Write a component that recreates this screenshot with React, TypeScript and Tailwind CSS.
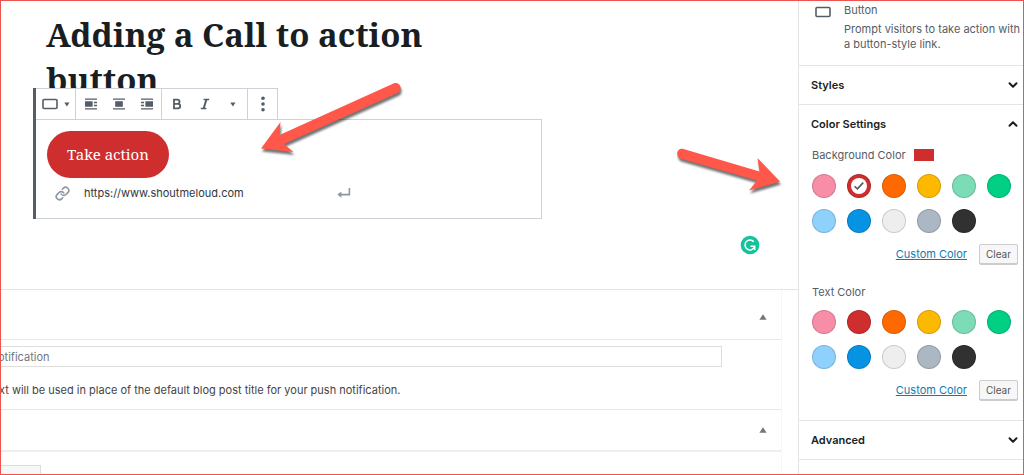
import { useState } from 'react';
import { ChevronDown, ChevronUp } from 'lucide-react';
import clsx from 'clsx';

const palette = [
  { name: 'Pale pink', bg: 'bg-[#f78da7]' },
  { name: 'Vivid red', bg: 'bg-[#cf2e2e]' },
  { name: 'Luminous vivid orange', bg: 'bg-[#ff6900]' },
  { name: 'Luminous vivid amber', bg: 'bg-[#fcb900]' },
  { name: 'Light green cyan', bg: 'bg-[#7bdcb5]' },
  { name: 'Vivid green cyan', bg: 'bg-[#00d084]' },
  { name: 'Pale cyan blue', bg: 'bg-[#8ed1fc]' },
  { name: 'Vivid cyan blue', bg: 'bg-[#0693e3]' },
  { name: 'Very light gray', bg: 'bg-[#eeeeee]' },
  { name: 'Cyan bluish gray', bg: 'bg-[#abb8c3]' },
  { name: 'Very dark gray', bg: 'bg-[#313131]' },
];

function ButtonIcon() {
  return (
    <svg width="16" height="12" viewBox="0 0 16 12" fill="none" stroke="currentColor" strokeWidth="1.6">
      <rect x="1" y="1.5" width="14" height="9" rx="1" />
    </svg>
  );
}

function Caret() {
  return (
    <svg width="6" height="5" viewBox="0 0 6 5" fill="currentColor">
      <path d="M0.3 0.5h5.2L2.9 4.5z" />
    </svg>
  );
}

function AlignIcon({ side }: { side: 'left' | 'center' | 'right' }) {
  return (
    <svg width="14" height="14" viewBox="0 0 14 14" fill="currentColor">
      <path d="M1 1.4h12v1.4H1zM1 11.2h12v1.4H1z" />
      {side === 'left' && <path d="M1 4.2h7.6v5.6H1zM10 4.8h3v1.4h-3zM10 7.8h3v1.4h-3z" />}
      {side === 'center' && <path d="M3.2 4.2h7.6v5.6H3.2z" />}
      {side === 'right' && <path d="M5.4 4.2H13v5.6H5.4zM1 4.8h3v1.4H1zM1 7.8h3v1.4H1z" />}
    </svg>
  );
}

function Toolbar() {
  const item = 'flex h-full w-7 items-center justify-center';
  return (
    <div role="toolbar" aria-label="Block tools" className="flex h-8 w-fit border-y border-r border-[#ccd2d7] bg-white text-[#555d66]">
      <button aria-label="Change block type" className="flex w-[39px] items-center justify-center gap-1.5">
        <ButtonIcon />
        <Caret />
      </button>
      <div className="flex w-[86px] justify-center border-l border-[#ccd2d7]">
        <button aria-label="Align left" className={item}><AlignIcon side="left" /></button>
        <button aria-label="Align center" className={item}><AlignIcon side="center" /></button>
        <button aria-label="Align right" className={item}><AlignIcon side="right" /></button>
      </div>
      <div className="flex w-[86px] justify-center border-l border-[#ccd2d7]">
        <button aria-label="Bold" className={item}>
          <svg width="10" height="12" viewBox="0 0 10 12" fill="none" stroke="currentColor" strokeWidth="1.8">
            <path d="M2 1.6h3.4a2.1 2.1 0 0 1 0 4.2H2zM2 5.8h3.9a2.3 2.3 0 0 1 0 4.6H2z" />
          </svg>
        </button>
        <button aria-label="Italic" className={item}>
          <svg width="10" height="12" viewBox="0 0 10 12" fill="none" stroke="currentColor" strokeWidth="1.5">
            <path d="M3.6 1.4h5.6M0.8 10.6h5.6" />
            <path d="M6.5 1.4L3.6 10.6" strokeWidth="1.9" />
          </svg>
        </button>
        <button aria-label="More rich text controls" className={item}><Caret /></button>
      </div>
      <button aria-label="More options" className="flex w-[30px] items-center justify-center border-l border-[#ccd2d7]">
        <svg width="4" height="16" viewBox="0 0 4 16" fill="currentColor">
          <circle cx="2" cy="2.2" r="1.8" />
          <circle cx="2" cy="8" r="1.8" />
          <circle cx="2" cy="13.8" r="1.8" />
        </svg>
      </button>
    </div>
  );
}

function ButtonBlock() {
  return (
    <div className="relative -mt-3.5 ml-8 w-[509px] max-w-full border-l-3 border-[#555d66]">
      <Toolbar />
      <div className="-mt-px h-[100px] border border-l-0 border-[#ccd2d7] pl-[11px] pt-[11px]">
        <button className="h-[47px] w-[122px] rounded-full bg-[#cf2e2e] font-['Noto_Serif','DejaVu_Serif_Condensed','DejaVu_Serif',serif] text-[15px] text-white">
          Take action
        </button>
        <form className="flex h-[30px] items-center pl-2" onSubmit={(e) => e.preventDefault()}>
          <svg width="15" height="15" viewBox="0 0 24 24" fill="none" stroke="#8d96a0" strokeWidth="2.6" strokeLinecap="round">
            <path d="M10 13a5 5 0 0 0 7.54.54l3-3a5 5 0 0 0-7.07-7.07l-1.72 1.71" />
            <path d="M14 11a5 5 0 0 0-7.54-.54l-3 3a5 5 0 0 0 7.07 7.07l1.71-1.71" />
          </svg>
          <input
            aria-label="Link URL"
            className="ml-3.5 w-[253px] text-[11px] text-[#32373c] outline-none"
            defaultValue="https://www.shoutmeloud.com"
          />
          <button aria-label="Apply" type="submit">
            <svg width="14" height="12" viewBox="0 0 14 12">
              <path d="M12.4 1v6.6H3.4" fill="none" stroke="#8d96a0" strokeWidth="1.6" />
              <path d="M0.4 7.6L4.4 4.4v6.4z" fill="#8d96a0" />
            </svg>
          </button>
        </form>
      </div>
    </div>
  );
}

function Swatches({ label, selected, onSelect }: { label: string; selected: number | null; onSelect: (i: number) => void }) {
  return (
    <div role="group" aria-label={label} className="flex flex-wrap gap-[11px]">
      {palette.map((color, i) => (
        <button
          key={color.name}
          aria-label={color.name}
          aria-pressed={selected === i}
          onClick={() => onSelect(i)}
          className={clsx('flex size-6 items-center justify-center rounded-full border border-black/15', color.bg)}
        >
          {selected === i && (
            <span className="flex size-4 shrink-0 items-center justify-center rounded-full bg-white">
              <svg width="12" height="12" viewBox="0 0 12 12" fill="none" stroke="#555d66" strokeWidth="1.7">
                <path d="M1.6 6.4l2.8 2.5L10.2 2.6" />
              </svg>
            </span>
          )}
        </button>
      ))}
    </div>
  );
}

function ColorActions({ onClear }: { onClear: () => void }) {
  return (
    <div className="flex items-center justify-end gap-3 pr-[5px]">
      <a href="#custom" className="text-[11px] leading-4 text-[#0c7db1] underline">Custom Color</a>
      <button
        onClick={onClear}
        className="h-5 w-[39px] rounded-xs border border-[#ccc] bg-[#f7f7f7] text-[10px] text-[#555] shadow-[0_1px_0_#ccc]"
      >
        Clear
      </button>
    </div>
  );
}

function PanelToggle({ title, open = false }: { title: string; open?: boolean }) {
  const Icon = open ? ChevronUp : ChevronDown;
  return (
    <button aria-expanded={open} className="flex h-[38px] w-full items-center justify-between pl-3 pr-[3px] text-[11px] font-semibold text-[#191e23]">
      {title}
      <Icon className="size-3.5" strokeWidth={3.4} />
    </button>
  );
}

function Sidebar() {
  const [background, setBackground] = useState<number | null>(1);
  const [text, setText] = useState<number | null>(null);

  return (
    <aside className="w-[225px] shrink-0 border-l border-[#e2e4e7] text-[11px] text-[#555d66]">
      <div className="flex h-[65px] gap-[13px] border-b border-[#e2e4e7] pl-4 pt-px">
        <span className="pt-1"><ButtonIcon /></span>
        <div>
          <h2 className="leading-4">Button</h2>
          <p className="mt-1 leading-[15px]">Prompt visitors to take action with a button-style link.</p>
        </div>
      </div>
      <div className="border-b border-[#e2e4e7]">
        <PanelToggle title="Styles" />
      </div>
      <div className="border-b border-[#e2e4e7] pb-5">
        <PanelToggle title="Color Settings" open />
        <div className="pl-[13px] pt-1">
          <div className="flex h-4 items-center gap-2">
            Background Color
            {background !== null && <span className={clsx('h-3 w-5', palette[background].bg)} />}
          </div>
          <div className="pb-[11px] pt-[11px]">
            <Swatches label="Background Color" selected={background} onSelect={setBackground} />
          </div>
          <ColorActions onClear={() => setBackground(null)} />
          <div className="mt-5 flex h-4 items-center">Text Color</div>
          <div className="pb-[11px] pt-[10px]">
            <Swatches label="Text Color" selected={text} onSelect={setText} />
          </div>
          <ColorActions onClear={() => setText(null)} />
        </div>
      </div>
      <div className="border-b border-[#e2e4e7]">
        <PanelToggle title="Advanced" />
      </div>
    </aside>
  );
}

function MetaToggle({ label }: { label: string }) {
  return (
    <button aria-label={label} className="flex size-6 items-center justify-center text-[#72777c]">
      <svg width="8" height="6" viewBox="0 0 8 6" fill="currentColor">
        <path d="M4 0.2L7.6 5.8H0.4z" />
      </svg>
    </button>
  );
}

function MetaBoxes() {
  return (
    <div className="border-t border-[#e2e4e7]">
      <div className="mr-4 border-r border-[#f6f6f6]">
        <div className="flex h-[50px] items-center justify-end border-b border-[#e8e8e8] pr-1.5 pt-1">
          <MetaToggle label="Toggle push notification panel" />
        </div>
        <div className="h-[70px] border-b border-[#e8e8e8] pt-1.5">
          <input
            aria-label="Notification title"
            defaultValue="otification"
            className="-ml-1 block h-[21px] w-[725px] max-w-[93%] border border-[#ddd] text-[11px] text-[#72777c] outline-none"
          />
          <p className="-ml-0.5 mt-[15px] text-[11px] leading-4 text-[#444]">
            xt will be used in place of the default blog post title for your push notification.
          </p>
        </div>
        <div className="flex h-[42px] items-center justify-end border-b-2 border-[#eee] pr-1.5">
          <MetaToggle label="Toggle next panel" />
        </div>
        <div className="pt-[13px]">
          <button aria-label="Add" className="block h-6 w-10 border border-l-0 border-[#ddd] bg-[#f7f7f7]" />
        </div>
      </div>
    </div>
  );
}

function Arrows() {
  return (
    <svg className="pointer-events-none absolute -left-px -top-px drop-shadow-[1px_3px_1px_rgba(0,0,0,0.55)]" width="800" height="240" viewBox="0 0 800 240" fill="#ff584a">
      <path d="M261 148.5L280.500 122L279.500 135L394 83.200C400 81.500 403 89 398.500 92.500L284 144L293.500 152z" />
      <path d="M780 181.500L749 190.500L757 180.500L680 158.500C675 155.500 677 147.500 683.500 149L759.500 171.500L757.500 158z" />
    </svg>
  );
}

export default function App() {
  return (
    <div className="relative flex h-screen overflow-hidden border border-[#ee5350] bg-white font-['Inter','Liberation_Sans',sans-serif]">
      <main className="flex min-w-0 flex-1 flex-col">
        <div className="h-[288px] shrink-0">
          <h1 className="ml-[45px] max-w-[440px] pt-[11px] font-['Noto_Serif','DejaVu_Serif_Condensed','DejaVu_Serif',serif] text-[33px] font-bold leading-[45px] text-[#191e23]">
            Adding a Call to action button
          </h1>
          <ButtonBlock />
          <div className="flex justify-end pr-[38px] pt-4">
            <button aria-label="Grammarly">
              <svg width="20" height="20" viewBox="0 0 20 20" fill="none">
                <circle cx="10" cy="10" r="9.300" fill="#15c39a" />
                <path d="M13.800 6.700A5 5 0 1 0 14.600 11.800" stroke="white" strokeWidth="1.500" />
                <path d="M10.500 11.200H14.700V15" stroke="white" strokeWidth="1.500" />
              </svg>
            </button>
          </div>
        </div>
        <MetaBoxes />
      </main>
      <Sidebar />
      <Arrows />
    </div>
  );
}
